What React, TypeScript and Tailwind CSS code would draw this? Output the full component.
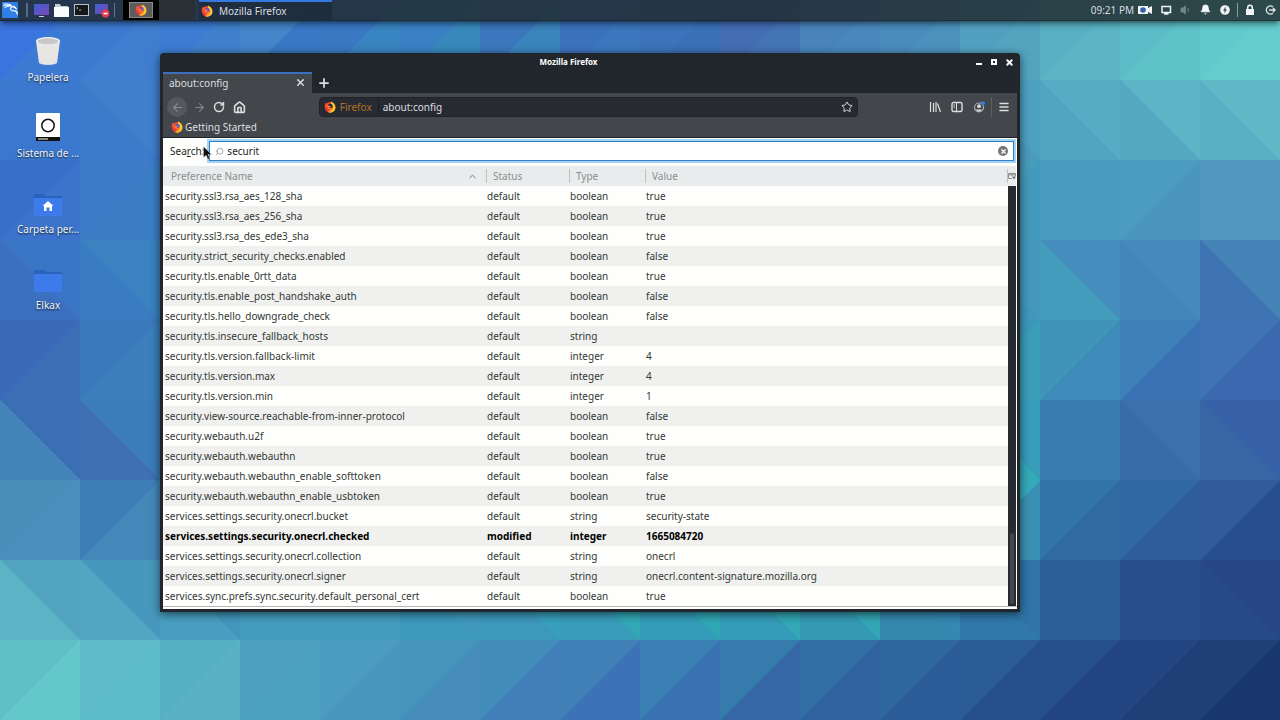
import React, { useState } from 'react';
import { ArrowLeft, ArrowRight, Bell, ChevronUp, House, Menu, Plus, RotateCw, Search, Star, Volume1, X } from 'lucide-react';
import { SiKalilinux } from 'react-icons/si';

interface Pref {
  name: string;
  status?: string;
  type: string;
  value: string;
}

const prefs: Pref[] = [
  { name: 'security.ssl3.rsa_aes_128_sha', type: 'boolean', value: 'true' },
  { name: 'security.ssl3.rsa_aes_256_sha', type: 'boolean', value: 'true' },
  { name: 'security.ssl3.rsa_des_ede3_sha', type: 'boolean', value: 'true' },
  { name: 'security.strict_security_checks.enabled', type: 'boolean', value: 'false' },
  { name: 'security.tls.enable_0rtt_data', type: 'boolean', value: 'true' },
  { name: 'security.tls.enable_post_handshake_auth', type: 'boolean', value: 'false' },
  { name: 'security.tls.hello_downgrade_check', type: 'boolean', value: 'false' },
  { name: 'security.tls.insecure_fallback_hosts', type: 'string', value: '' },
  { name: 'security.tls.version.fallback-limit', type: 'integer', value: '4' },
  { name: 'security.tls.version.max', type: 'integer', value: '4' },
  { name: 'security.tls.version.min', type: 'integer', value: '1' },
  { name: 'security.view-source.reachable-from-inner-protocol', type: 'boolean', value: 'false' },
  { name: 'security.webauth.u2f', type: 'boolean', value: 'true' },
  { name: 'security.webauth.webauthn', type: 'boolean', value: 'true' },
  { name: 'security.webauth.webauthn_enable_softtoken', type: 'boolean', value: 'false' },
  { name: 'security.webauth.webauthn_enable_usbtoken', type: 'boolean', value: 'true' },
  { name: 'services.settings.security.onecrl.bucket', type: 'string', value: 'security-state' },
  { name: 'services.settings.security.onecrl.checked', status: 'modified', type: 'integer', value: '1665084720' },
  { name: 'services.settings.security.onecrl.collection', type: 'string', value: 'onecrl' },
  { name: 'services.settings.security.onecrl.signer', type: 'string', value: 'onecrl.content-signature.mozilla.org' },
  { name: 'services.sync.prefs.sync.security.default_personal_cert', type: 'boolean', value: 'true' },
];

// Each row of the wallpaper: the way its cells are cut, then "upper lower" colours per cell
const wallpaper: { cut: '/' | '\\'; cells: string[] }[] = [
  { cut: '/', cells: ['3a74de 3d7ad4', '3c7ad0 3f7ece', '3d7cd2 3f80cc', '4484c8 3878c4', '3a78c4 3884c0', '3a80c4 3888bc', '3c76bc 3a84bc', '3a72bc 3c76bc', '3b74ba 3a70b6', '446eb4 4474b4', '4884ba 4a88bc', '4a8cbc 4c92be', '52a0c0 54a4c0', '58b0c4 5ab4c4', '5cbcc8 5ec2c8', '62cacc 64cccc'] },
  { cut: '\\', cells: ['3b79ce 3b77ce', '407fcc 3d7cca', '3f80c8 3c7cc4', '3c80c0 3c80c0', '3c80c0 3c80c0', '3c80c0 3c80c0', '3c80c0 3c80c0', '3c80c0 3c80c0', '3c80c0 3c80c0', '3c80c0 3c80c0', '4490bc 4490bc', '4898bc 4898bc', '4ea0c0 4a9abe', '56acc4 52a4c0', '5cb4c6 54a8c2', '60b8c6 58b0c4'] },
  { cut: '/', cells: ['3870cc 3b74ca', '3c7cc8 3c7ec6', '3c80c4 3c80c4', '3c80c0 3c80c0', '3c80c0 3c80c0', '3c80c0 3c80c0', '3c80c0 3c80c0', '3c80c0 3c80c0', '3c80c0 3c80c0', '3c80c0 3c80c0', '4490bc 4490bc', '4490bc 4490bc', '469cbc 449abc', '4a9cbe 4a9cbe', '4c9cc0 4a96be', '5098c0 5098c0'] },
  { cut: '\\', cells: ['3a74c4 3b6fc0', '3a82c0 3a7cc2', '3a84c0 3a7cc0', '3c80c0 3c80c0', '3c80c0 3c80c0', '3c80c0 3c80c0', '3c80c0 3c80c0', '3c80c0 3c80c0', '3c80c0 3c80c0', '3c80c0 3c80c0', '4490bc 4490bc', '4490bc 4490bc', '4498bc 4096bc', '448cbc 429cbc', '468abc 4286ba', '4684b8 3e74b4'] },
  { cut: '/', cells: ['3b6ab8 3c6eb6', '3a7abc 3b80bc', '3a80bc 3a80bc', '3c80c0 3c80c0', '3c80c0 3c80c0', '3c80c0 3c80c0', '3c80c0 3c80c0', '3c80c0 3c80c0', '3c80c0 3c80c0', '3c80c0 3c80c0', '4490bc 4490bc', '4490bc 4490bc', '3c98ba 3a9eb8', '4094ba 3e8ab8', '3f80b8 3a72b4', '4072b6 3c68b0'] },
  { cut: '\\', cells: ['3c6eb4 4484b8', '3b7cba 3f70b4', '3b7cba 3f70b4', '3c80c0 3c80c0', '3c80c0 3c80c0', '3c80c0 3c80c0', '3c80c0 3c80c0', '3c80c0 3c80c0', '3c80c0 3c80c0', '3c80c0 3c80c0', '4490bc 4490bc', '4490bc 4490bc', '369cba 32aab6', '387cb0 387cb0', '3a70ac 366ca8', '3862a8 3866a4'] },
  { cut: '/', cells: ['4a8ebc 4a90be', '3f7fb8 4488ba', '4488ba 4488ba', '4490bc 4490bc', '4490bc 4490bc', '4490bc 4490bc', '3c98ba 3c98ba', '3c98ba 3c98ba', '3c98ba 3c98ba', '3c98ba 3c98ba', '3c98ba 3c98ba', '3c98ba 3c98ba', '36aab8 3a90b4', '3374a8 306aa0', '3068a2 2e5c98', '305c9c 28508e'] },
  { cut: '\\', cells: ['52a4c0 5ab4c6', '4898be 52a6c2', '4296be 489ec0', '429cbe 429cbe', '429cbe 429cbe', '4098bc 3c98bc', '38a0bc 3c98bc', '32a8b6 389cb8', '30a8b4 349cb8', '32a8b4 349cb8', '32a6b4 349ab4', '3488b4 3488b0', '3074a8 3078aa', '2c5e98 2c5e98', '28508c 28508c', '264684 264a88'] },
  { cut: '/', cells: ['60c0c8 64c8ca', '5ebac6 5cbcc8', '56b0c4 58b2c4', '4ea2c0 4ca0c0', '4c9cc0 4896be', '4694bc 468cba', '428cba 427eb8', '4080b6 3c72b6', '3b80b4 3872b2', '357cac 3668a8', '306ea4 3062a0', '2e689c 2c5c98', '2c5c96 26508c', '26508a 224480', '224480 1e3e78', '1e3e78 183670'] },
];

function Wallpaper() {
  return (
    <svg
      className="absolute inset-0 h-full w-full"
      viewBox="0 0 1280 720"
      preserveAspectRatio="xMidYMid slice"
      shapeRendering="crispEdges"
      aria-hidden="true"
    >
      {wallpaper.map((row, r) =>
        row.cells.map((cell, c) => {
          const [upper, lower] = cell.split(' ');
          const x = c * 80;
          const y = r * 80;
          const lowerPoints =
            row.cut === '/'
              ? `${x + 80},${y} ${x + 80},${y + 80} ${x},${y + 80}`
              : `${x},${y} ${x + 80},${y + 80} ${x},${y + 80}`;
          return (
            <g key={`${r}-${c}`}>
              <rect x={x} y={y} width="80" height="80" fill={`#${upper}`} />
              <polygon points={lowerPoints} fill={`#${lower}`} />
            </g>
          );
        })
      )}
    </svg>
  );
}

function FirefoxLogo({ className, core = '#4a5fc8' }: { className: string; core?: string }) {
  return (
    <svg className={className} viewBox="0 0 24 24" aria-hidden="true">
      <circle cx="12" cy="12.5" r="10.5" fill="#ee3b3a" />
      <path d="M14 1c5 2 9 6 9 12 0 5-3 9-8 10-3 1-5 0-7-1 7-1 8-6 7-11-1-4-2-6-1-10z" fill="#ffc72e" />
      <path d="M8 22c4 1 9-1 10-6 1-3 0-6-1-8l-3 4-2 6z" fill="#ff8e26" />
      <path d="M1.500 13C1.500 8 2.500 5 4 3c.5 1.500 1.500 2.500 3 3 1.500-1.500 3-2 5-2.500L8 9z" fill="#f4572c" />
      <circle cx="12.500" cy="10.500" r="4.800" fill={core} />
      <path d="M6.500 9.500c2-1 4-.5 5 .5l3 1c-1 2-3 1.500-4 2.500 2 1.500 4 .5 5.500-.5-1 3.500-5 4.500-7.500 2.500-2-1.500-2.500-4-2-6z" fill="#ff7a2a" />
    </svg>
  );
}

function Launchers() {
  return (
    <div className="flex items-center gap-1">
      <button aria-label="Show desktop" className="flex h-4 w-4 items-center">
        <svg viewBox="0 0 16 16" className="h-4 w-4">
          <defs>
            <linearGradient id="screen" x1="0" y1="0" x2="1" y2="1">
              <stop offset="0" stopColor="#3f5fd0" />
              <stop offset="1" stopColor="#7a48b8" />
            </linearGradient>
          </defs>
          <rect x="0" y="2" width="15" height="11" fill="url(#screen)" />
          <rect x="5" y="14" width="5" height="1" fill="#c9d2dc" />
        </svg>
      </button>
      <button aria-label="Files" className="flex h-4 w-4 items-center">
        <svg viewBox="0 0 16 16" className="h-4 w-4">
          <path d="M1 2h5l1 2h7v4H1z" fill="#c4ccd4" />
          <rect x="0" y="5" width="15" height="10" fill="#fbfcfd" />
        </svg>
      </button>
      <button aria-label="Terminal" className="flex h-4 w-4 items-center">
        <svg viewBox="0 0 16 16" className="h-4 w-4">
          <rect x="0.500" y="2.500" width="14" height="11" fill="#15181b" stroke="#b9bfc3" />
          <path d="M2.500 5l1.500 1-1.500 1M5 8h2" stroke="#d8dcdf" fill="none" strokeWidth="0.800" />
        </svg>
      </button>
      <button aria-label="Screen recorder" className="flex h-4 w-4 items-center">
        <svg viewBox="0 0 16 16" className="h-4 w-4">
          <rect x="1" y="2" width="13" height="10" fill="url(#screen)" />
          <circle cx="11.500" cy="11.500" r="4" fill="#e03a50" />
          <rect x="9.500" y="10.700" width="4" height="1.600" fill="#fff" />
        </svg>
      </button>
    </div>
  );
}

function Panel() {
  return (
    <header className="relative flex h-[21px] items-center border-b border-black/25 bg-[#1f2729]/80 pb-px text-[#d9dee0] shadow-md shadow-black/40">
      <button aria-label="Applications" className="ml-0.5 flex h-4 w-4 items-center justify-center bg-[#2f7fe6] text-white">
        <SiKalilinux size={15} stroke="currentColor" strokeWidth={1} />
      </button>
      <span className="mr-1.5 ml-2 h-3.5 w-0.5 bg-slate-400/50" />
      <Launchers />
      <span className="mr-2 ml-1 h-3.5 w-px bg-slate-400/60" />
      <button aria-label="Workspace 1" className="flex h-5 w-9 items-center justify-center bg-black">
        <span className="flex h-4 w-6 items-center justify-center border border-[#8b8b8b] bg-[#5c5c5c]">
          <FirefoxLogo className="h-3 w-3" core="#7a4ac0" />
        </span>
      </button>
      <button aria-label="Workspace 2" className="h-5 w-9 bg-[#2a2f36]" />
      <button className="ml-1 flex h-5 w-[133px] items-center gap-1.5 border-t-2 border-[#3478e0] bg-[#1c2a3a]/70 pl-0.5">
        <FirefoxLogo className="h-3 w-3" core="#7a4ac0" />
        <span>Mozilla Firefox</span>
      </button>

      <div className="ml-auto flex items-center gap-2 pr-1">
        <time className="-mr-1">09:21 PM</time>
        <button aria-label="Camera">
          <svg viewBox="0 0 14 12" className="h-3 w-3.5">
            <path d="M0 2h10v2l4-2v8l-4-2v2H0z" fill="#f2f5f6" />
            <circle cx="5" cy="6" r="2.800" fill="#2f5fae" />
          </svg>
        </button>
        <button aria-label="Network">
          <svg viewBox="0 0 12 12" className="h-3 w-3">
            <path d="M2 2.500h8.500v6H2zM4 10h4.500" fill="none" stroke="#eef2f3" strokeWidth="1.500" />
          </svg>
        </button>
        <button aria-label="Volume" className="text-[#71848a]">
          <Volume1 size={12} fill="currentColor" />
        </button>
        <button aria-label="Notifications" className="text-[#f2f5f6]">
          <Bell size={11} fill="currentColor" />
        </button>
        <button aria-label="Power">
          <svg viewBox="0 0 12 12" className="h-3 w-3">
            <circle cx="6" cy="6" r="4.800" fill="#f2f5f6" />
            <path d="M6.800 2.500L4 6.600h1.700L5.200 9.500 8 5.400H6.300z" fill="#2b444b" />
          </svg>
        </button>
        <span className="-mx-0.5 h-3.5 w-px bg-slate-300/60" />
        <button aria-label="Lock screen" className="text-[#f2f5f6]">
          <svg viewBox="0 0 12 12" className="h-3 w-3">
            <rect x="2" y="5" width="8" height="6" fill="currentColor" />
            <path d="M3.700 5V3.500a2.300 2.300 0 014.600 0V5" fill="none" stroke="currentColor" strokeWidth="1.500" />
          </svg>
        </button>
        <button aria-label="Log out">
          <svg viewBox="0 0 12 12" className="h-3 w-3">
            <path d="M9 3a4 4 0 100 6M5 6h6M9 4l2 2-2 2" fill="none" stroke="#dfe5e7" strokeWidth="1.400" />
          </svg>
        </button>
      </div>
    </header>
  );
}

function Folder({ home }: { home?: boolean }) {
  return (
    <svg viewBox="0 0 30 30" className="h-[30px] w-[30px]">
      <path d="M1 6h10l2 2h16v5H1z" fill="#2b62bd" />
      <rect x="1" y="10" width="28" height="18" fill="#3d7bea" />
      {home && <path d="M15 13l5.500 5H19v5h-2.500v-3.500h-3V23H11v-5H9.500z" fill="#fff" />}
    </svg>
  );
}

const desktopIcons = [
  {
    label: 'Papelera',
    icon: (
      <svg viewBox="0 0 30 30" className="h-[30px] w-[30px]">
        <path d="M3 5l3 22c3 2.500 15 2.500 18 0l3-22z" fill="#e6e6e4" />
        <ellipse cx="15" cy="5" rx="12" ry="4" fill="#f2f2f0" />
        <ellipse cx="15" cy="5.300" rx="10.500" ry="3" fill="#c4c8c6" />
      </svg>
    ),
  },
  {
    label: 'Sistema de ...',
    icon: (
      <svg viewBox="0 0 30 30" className="h-[30px] w-[30px]">
        <rect x="3" y="1" width="24" height="25" rx="1" fill="#fff" />
        <circle cx="15" cy="13.500" r="6.200" fill="none" stroke="#111" strokeWidth="1.500" />
        <rect x="3" y="25" width="24" height="4" fill="#111" />
        <rect x="5" y="26.500" width="10" height="1" fill="#fff" />
      </svg>
    ),
  },
  { label: 'Carpeta per...', icon: <Folder home /> },
  { label: 'Elkax', icon: <Folder /> },
];

function BrowserChrome() {
  return (
    <>
      {/* Title bar */}
      <div className="flex h-4 items-center pb-1">
        <h1 className="flex-1 text-center text-[8px] leading-3 font-bold text-white">Mozilla Firefox</h1>
        <div className="flex w-[43px] items-center gap-[5px] text-white">
          <button aria-label="Minimize" className="flex h-2.5 w-2.5 items-end justify-center pb-0.5">
            <span className="h-0.5 w-1.5 bg-white" />
          </button>
          <button aria-label="Maximize" className="flex h-2.5 w-2.5 items-center justify-center">
            <span className="h-1.5 w-1.5 border-2 border-white" />
          </button>
          <button aria-label="Close" className="flex h-2.5 w-2.5 items-center justify-center">
            <X size={9} strokeWidth={5} />
          </button>
        </div>
      </div>

      {/* Tabs */}
      <div className="flex h-[21px] items-stretch">
        <div className="flex w-[149px] items-center justify-between border-t-2 border-[#3b6fc0] bg-[#43474b] px-1.5 pb-0.5">
          <span>about:config</span>
          <button aria-label="Close tab"><X size={11} strokeWidth={3} /></button>
        </div>
        <button aria-label="New tab" className="flex w-6 items-center justify-center">
          <Plus size={14} strokeWidth={3} />
        </button>
      </div>

      {/* Navigation */}
      <div className="flex h-7 items-center bg-[#43474b] pr-[7px] pl-1">
        <div className="flex flex-1 items-center gap-1">
          <button aria-label="Back" className="flex h-5 w-5 items-center justify-center rounded-full bg-[#55585c] text-[#8a8d90]">
            <ArrowLeft size={13} />
          </button>
          <button aria-label="Forward" className="flex h-4 w-4 items-center justify-center text-[#85888b]">
            <ArrowRight size={13} />
          </button>
          <button aria-label="Reload" className="flex h-4 w-4 items-center justify-center">
            <RotateCw size={12} strokeWidth={3} />
          </button>
          <button aria-label="Home" className="flex h-4 w-4 items-center justify-center">
            <House size={13} strokeWidth={3} />
          </button>
        </div>
        <div className="flex h-5 w-[64%] items-center rounded-sm border border-[#1f2328] bg-[#272b31] px-1">
          <FirefoxLogo className="mr-1 h-3 w-3" core="#272b31" />
          <span className="border-r border-[#1b1e22] pr-1.5 text-[#b5702a]">Firefox</span>
          <input aria-label="Address" defaultValue="about:config" className="min-w-0 flex-1 bg-transparent pl-1 outline-none" />
          <button aria-label="Bookmark this page"><Star size={12} /></button>
        </div>
        <div className="flex flex-1 items-center justify-end gap-2.5">
          <button aria-label="Library">
            <svg viewBox="0 0 12 12" className="h-3 w-3">
              <path d="M1.500 1v10M4.500 2v9M7 1v10M8.500 2.500l3 8.500" fill="none" stroke="currentColor" strokeWidth="1.200" />
            </svg>
          </button>
          <button aria-label="Sidebars">
            <svg viewBox="0 0 12 12" className="h-3 w-3">
              <rect x="1" y="1.500" width="10" height="9" rx="1.500" fill="none" stroke="currentColor" strokeWidth="1.400" />
              <path d="M5.500 2v8M2.500 4h1.500M2.500 6h1.500" stroke="currentColor" />
            </svg>
          </button>
          <button aria-label="Account">
            <svg viewBox="0 0 12 12" className="h-3 w-3">
              <circle cx="6" cy="6.500" r="4.500" fill="none" stroke="#a9acae" strokeWidth="1.200" />
              <circle cx="6" cy="5.200" r="1.900" fill="#d8dadb" />
              <path d="M2.800 8.500h6.400L7.500 10.500h-3z" fill="#d8dadb" />
              <circle cx="10" cy="2.200" r="2" fill="#2f7fe0" />
            </svg>
          </button>
          <span className="-mx-1 h-5 w-px bg-[#5c6064]" />
          <button aria-label="Menu"><Menu size={12} strokeWidth={3} /></button>
        </div>
      </div>

      {/* Bookmarks */}
      <div className="flex h-[17px] items-center border-b border-[#1f2328] bg-[#43474b] px-2 pb-1">
        <a href="#" className="flex items-center gap-0.5">
          <FirefoxLogo className="h-3 w-3" />
          Getting Started
        </a>
      </div>
    </>
  );
}

function ConfigPage() {
  const [query, setQuery] = useState('securit');

  return (
    <main className="bg-[#fefffc] pb-0.5 text-[#333736]">
      <div className="flex h-7 items-center gap-[5px] pr-[3px] pb-0.5 pl-[7px]">
        <label htmlFor="filter" className="text-[#1f2322]">
          Sea<span className="underline">r</span>ch:
        </label>
        <div className="flex h-5 flex-1 items-center gap-[3px] border border-[#2f7fc8] bg-white px-[5px] shadow-[0_0_0_2px_#a4d4f4]">
          <Search size={9} className="-scale-x-100 text-[#8a8d8c]" />
          <input
            id="filter"
            value={query}
            onChange={(e) => setQuery(e.target.value)}
            className="min-w-0 flex-1 bg-transparent text-[#1f2322] outline-none"
          />
          <button
            aria-label="Clear"
            onClick={() => setQuery('')}
            className="flex h-2.5 w-2.5 items-center justify-center rounded-full bg-[#747674] text-white"
          >
            <X size={7} strokeWidth={4} />
          </button>
        </div>
      </div>

      <div className="flex border-b border-[#b4b8b6]">
        <table className="flex-1 table-fixed border-collapse text-left">
          <colgroup>
            <col className="w-[323px]" />
            <col className="w-[83px]" />
            <col className="w-[76px]" />
            <col />
          </colgroup>
          <thead>
            <tr className="h-5 bg-[#e9ecec] text-[#8b8e8d]">
              <th className="p-0 font-normal">
                <div className="flex items-center justify-between pr-2 pl-2">
                  Preference Name
                  <ChevronUp size={11} className="text-[#6f7271]" />
                </div>
              </th>
              <th className="p-0 font-normal"><div className="border-l border-[#bfc2c1] pl-1.5">Status</div></th>
              <th className="p-0 font-normal"><div className="border-l border-[#bfc2c1] pl-1.5">Type</div></th>
              <th className="p-0 font-normal"><div className="border-x border-[#bfc2c1] pl-1.5">Value</div></th>
            </tr>
          </thead>
          <tbody>
            {prefs.map((pref) => (
              <tr
                key={pref.name}
                className={pref.status ? 'h-5 font-bold text-black even:bg-[#f0f1ef]' : 'h-5 even:bg-[#f0f1ef]'}
              >
                <td className="p-0 pl-0.5">{pref.name}</td>
                <td className="p-0 pl-px">{pref.status ?? 'default'}</td>
                <td className="p-0 pl-px">{pref.type}</td>
                <td className="p-0 pl-px">{pref.value}</td>
              </tr>
            ))}
          </tbody>
        </table>
        <div className="mr-px flex w-2 flex-col">
          <button aria-label="Select columns" className="flex h-5 items-center justify-center bg-[#e9ecec]">
            <svg viewBox="0 0 8 8" className="h-2 w-2">
              <path d="M4 6.500H.5v-5h7V4M.5 2.800h7M4 1.500v2.500" fill="none" stroke="#8b8e8d" />
              <path d="M4 4.500h4L6 7.500z" fill="#6f7271" />
            </svg>
          </button>
          <div className="flex flex-1 flex-col justify-end bg-[#272b31] px-0.5 pb-0.5">
            <div className="h-[17%] rounded-full bg-[#44484c]" />
          </div>
        </div>
      </div>
    </main>
  );
}

export default function App() {
  return (
    <div className="relative min-h-screen overflow-hidden bg-[#3c80c0] font-['Noto_Sans','Open_Sans',sans-serif] text-[10px] leading-[14px]">
      <Wallpaper />
      <Panel />

      <ul className="relative flex w-24 flex-col pt-[15px] text-[#f2f5f8]">
        {desktopIcons.map((item) => (
          <li key={item.label} className="h-[76px]">
            <button className="flex w-full flex-col items-center gap-1 [text-shadow:0_1px_2px_rgb(0_0_0/0.8)]">
              {item.icon}
              {item.label}
            </button>
          </li>
        ))}
      </ul>

      <section className="absolute top-[53px] right-65 left-40 rounded-t border-[3px] border-[#20262b] bg-[#20262b] text-[#dcdee0] shadow-[0_2px_10px_rgb(0_0_0/0.6)]">
        <BrowserChrome />
        <ConfigPage />
      </section>

      {/* Mouse pointer */}
      <svg viewBox="0 0 10 14" className="pointer-events-none absolute top-[146px] left-[203px] h-3.5 w-2.5">
        <path d="M.5.5v11l2.600-2.300 1.900 4 1.800-.8-1.900-3.900h3.600z" fill="#111" stroke="#c8c8c8" strokeWidth="0.500" />
      </svg>
    </div>
  );
}
